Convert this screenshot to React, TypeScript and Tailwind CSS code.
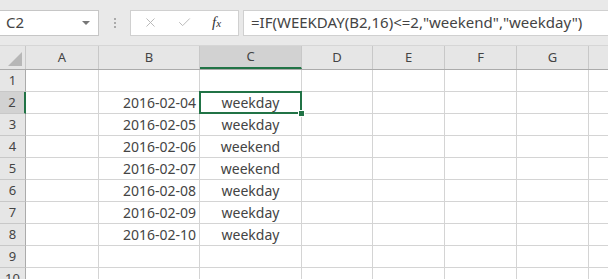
import { X, Check } from "lucide-react";

const cols = [
  { name: "A", w: "w-[73px]" },
  { name: "B", w: "w-[101px]" },
  { name: "C", w: "w-[102px]" },
  { name: "D", w: "w-[71px]" },
  { name: "E", w: "w-[72px]" },
  { name: "F", w: "w-[72px]" },
  { name: "G", w: "w-[72px]" },
];

const data: Record<number, [string, string]> = {
  2: ["2016-02-04", "weekday"],
  3: ["2016-02-05", "weekday"],
  4: ["2016-02-06", "weekend"],
  5: ["2016-02-07", "weekend"],
  6: ["2016-02-08", "weekday"],
  7: ["2016-02-09", "weekday"],
  8: ["2016-02-10", "weekday"],
};

const rows = [1, 2, 3, 4, 5, 6, 7, 8, 9, 10];

export default function App() {
  return (
    <div className="w-[608px] h-[279px] overflow-hidden bg-white font-['Noto_Sans',sans-serif] text-[#444]">
      {/* formula bar */}
      <div className="h-[46px] bg-[#e9e9e9] flex items-center border-b border-[#d6d6d6]">
        <div className="ml-[-1px] w-[100px] h-[26px] bg-white border border-[#c6c6c6] flex items-center justify-between pl-[6px] pr-[8px]">
          <span className="text-[15px] text-[#444]">C2</span>
          <span className="w-0 h-0 border-l-[4px] border-r-[4px] border-t-[4px] border-l-transparent border-r-transparent border-t-[#777]" />
        </div>
        <div className="w-[31px] flex flex-col items-center gap-[2px]">
          <span className="w-[2px] h-[2px] bg-[#aaa]" />
          <span className="w-[2px] h-[2px] bg-[#aaa]" />
          <span className="w-[2px] h-[2px] bg-[#aaa]" />
        </div>
        <div className="w-[109px] h-[26px] bg-white border border-[#d0d0d0] flex items-center">
          <X className="ml-[12px] text-[#b5b5b5]" size={15} strokeWidth={1.5} />
          <Check className="ml-[19px] text-[#b5b5b5]" size={15} strokeWidth={1.5} />
          <span className="ml-[20px] font-['Liberation_Serif',serif] italic text-[15px] text-[#333]">
            f<span className="text-[11px]">x</span>
          </span>
        </div>
        <div className="ml-[4px] flex-1 h-[26px] bg-white border border-[#d0d0d0] border-r-0 flex items-center pl-[7px]">
          <span className="text-[15px] text-[#444] whitespace-nowrap">
            =IF(WEEKDAY(B2,16)&lt;=2,"weekend","weekday")
          </span>
        </div>
      </div>

      {/* column headers */}
      <div className="flex h-[24px] bg-[#e6e6e6] border-b border-[#ababab]">
        <div className="w-[26px] h-full border-r border-[#c8c8c8] flex items-end justify-end p-[3px]">
          <span className="w-0 h-0 border-l-[14px] border-b-[14px] border-l-transparent border-b-[#b7b7b7]" />
        </div>
        {cols.map((c) => (
          <div
            key={c.name}
            className={`${c.w} shrink-0 h-full border-r border-[#c8c8c8] flex items-center justify-center text-[13px] text-[#444] ${
              c.name === "C" ? "bg-[#d2d2d2] border-b-2 border-b-[#217346]" : ""
            }`}
          >
            {c.name}
          </div>
        ))}
        <div className="flex-1" />
      </div>

      {/* rows */}
      {rows.map((r) => (
        <div key={r} className="flex h-[22px]">
          <div
            className={`w-[26px] shrink-0 h-full border-b border-[#c8c8c8] flex items-center justify-center text-[13px] text-[#444] ${
              r === 2 ? "bg-[#d2d2d2] border-r-2 border-r-[#217346]" : "bg-[#e6e6e6] border-r border-r-[#ababab]"
            }`}
          >
            {r}
          </div>
          {cols.map((c, i) => {
            const v = data[r];
            const selected = r === 2 && c.name === "C";
            return (
              <div
                key={c.name}
                className={`${c.w} shrink-0 h-full border-r border-b border-[#d4d4d4] flex items-center text-[14px] text-[#444] relative ${
                  selected ? "z-10" : ""
                } ${i === 1 ? "justify-end pr-[3px]" : "justify-center"}`}
              >
                {v && i === 1 ? v[0] : v && i === 2 ? v[1] : ""}
                {selected && (
                  <>
                    <span className="absolute left-[-1px] top-[-1px] right-[-1px] bottom-[-1px] border-2 border-[#217346]" />
                    <span className="absolute right-[-4px] bottom-[-4px] w-[7px] h-[7px] bg-[#217346] border border-white" />
                  </>
                )}
              </div>
            );
          })}
          <div className="flex-1 h-full border-b border-[#d4d4d4]" />
        </div>
      ))}
    </div>
  );
}
